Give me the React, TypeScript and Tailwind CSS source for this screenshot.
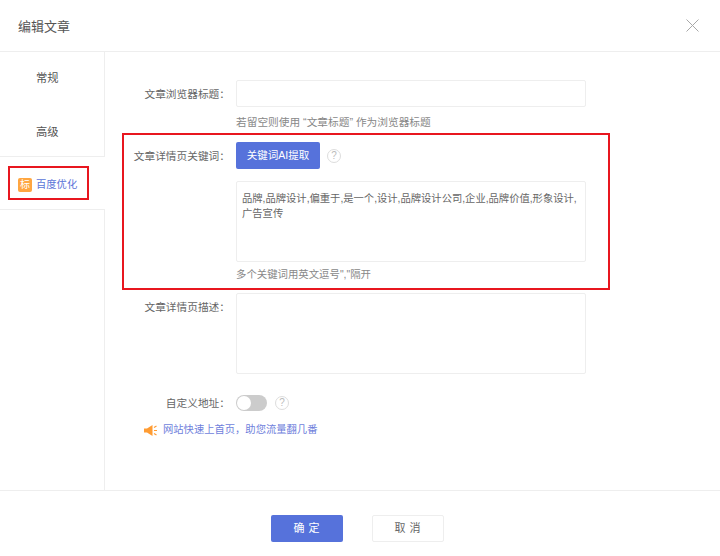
import React from 'react';

const font = "font-['Liberation_Sans','Noto_Sans_CJK_SC',sans-serif]";

const Help: React.FC = () => (
  <span className="flex h-[14px] w-[14px] items-center justify-center rounded-full border border-[#dddddd] text-[10px] leading-none text-[#bbbbbb]">
    ?
  </span>
);

const Label: React.FC<{ text: string; className?: string }> = ({ text, className }) => (
  <div className={`w-[115px] shrink-0 text-right text-[10.7px] text-[#666666] ${className ?? ''}`}>{text}</div>
);

const App: React.FC = () => {
  return (
    <div className={`relative flex h-[556px] w-[720px] flex-col overflow-hidden bg-white ${font}`}>
      {/* Header */}
      <div className="flex h-[52px] shrink-0 items-center justify-between border-b border-[#eeeeee] pl-[18px] pr-[21px]">
        <span className="pt-[2px] text-[13px] text-[#555555]">编辑文章</span>
        <svg width="13" height="13" viewBox="0 0 13 13" fill="none" stroke="#a8a8a8" strokeWidth="1">
          <path d="M0.5 0.5L12.5 12.5M12.5 0.5L0.5 12.5" />
        </svg>
      </div>

      <div className="flex h-[438px] shrink-0">
        {/* Sidebar */}
        <div className="flex w-[105px] shrink-0 flex-col">
          <div className="flex h-[52px] items-center border-r border-[#eeeeee] pl-[36px] text-[11.3px] text-[#555555]">常规</div>
          <div className="flex h-[53px] items-center border-b border-r border-[#eeeeee] pl-[36px] pt-[4px] text-[11.3px] text-[#555555]">高级</div>
          <div className="flex h-[53px] items-center gap-[4px] border-b border-[#eeeeee] pl-[18px] pt-[4px] text-[10.3px] text-[#5a74d8]">
            <span className="flex h-[14px] w-[14px] items-center justify-center rounded-[2px] bg-[#ffa640] text-[10px] leading-none text-white">
              标
            </span>
            百度优化
          </div>
          <div className="flex-1 border-r border-[#eeeeee]" />
        </div>

        {/* Form */}
        <div className="flex-1 pl-[10px] pt-[28px]">
          <div className="flex items-center gap-[6px]">
            <Label text="文章浏览器标题：" className="pt-[2px]" />
            <div className="h-[27px] w-[350px] rounded-[2px] border border-[#eeeeee]" />
          </div>
          <div className="ml-[121px] mt-[8px] text-[10.7px] leading-[14px] text-[#888888]">若留空则使用 “文章标题” 作为浏览器标题</div>

          <div className="mt-[13px] flex items-center gap-[6px]">
            <Label text="文章详情页关键词：" className="pt-[1px]" />
            <div className="flex h-[27px] w-[84px] items-center justify-center rounded-[2px] bg-[#5672db] text-[10.5px] text-white">
              关键词AI提取
            </div>
            <span className="ml-[1px]">
              <Help />
            </span>
          </div>

          <div className="ml-[121px] mt-[12px] h-[81px] w-[350px] rounded-[2px] border border-[#eeeeee] px-[5px] pb-[8px] pt-[9px] text-[10.3px] leading-[15px] text-[#666666]">
            品牌,品牌设计,偏重于,是一个,设计,品牌设计公司,企业,品牌价值,形象设计,广告宣传
          </div>
          <div className="ml-[121px] mt-[6px] text-[10.4px] leading-[14px] text-[#888888]">多个关键词用英文逗号","隔开</div>

          <div className="mt-[11px] flex items-start gap-[6px]">
            <Label text="文章详情页描述：" className="pt-[6px]" />
            <div className="h-[81px] w-[350px] rounded-[2px] border border-[#eeeeee]" />
          </div>

          <div className="mt-[21px] flex items-center gap-[6px]">
            <Label text="自定义地址：" />
            <div className="flex h-[16px] w-[31px] items-center rounded-full bg-[#cccccc] pl-[1px]">
              <span className="h-[14px] w-[14px] rounded-full bg-white" />
            </div>
            <span className="ml-[2px]">
              <Help />
            </span>
          </div>

          <div className="mt-[11px] flex items-center gap-[4px] pl-[29px] text-[10.3px] leading-[16px] text-[#6f7fdc]">
            <svg width="15" height="13" viewBox="0 0 15 13" fill="#ff9c33">
              <path d="M0 4.5H3L8.5 1V12L3 8.5H0Z" />
              <path d="M10 3.5L12.5 2M10 6.5H13M10 9.5L12.5 11" stroke="#ff9c33" strokeWidth="1.2" fill="none" />
            </svg>
            网站快速上首页，助您流量翻几番
          </div>
        </div>
      </div>

      {/* Footer */}
      <div className="flex flex-1 items-start justify-center gap-[29px] border-t border-[#eeeeee] pr-[5px] pt-[24px] text-[11px]">
        <div className="flex h-[27px] w-[72px] items-center justify-center rounded-[2px] bg-[#5672db] pl-[3px] tracking-[4px] text-white">确定</div>
        <div className="flex h-[27px] w-[72px] items-center justify-center rounded-[2px] border border-[#eeeeee] pl-[3px] tracking-[4px] text-[#666666]">取消</div>
      </div>

      {/* Red annotation boxes */}
      <div className="absolute left-[8px] top-[166px] h-[34px] w-[81px] border-2 border-[#e8161f]" />
      <div className="absolute left-[122px] top-[133px] h-[157px] w-[488px] border-2 border-[#e8161f]" />
    </div>
  );
};

export default App;
